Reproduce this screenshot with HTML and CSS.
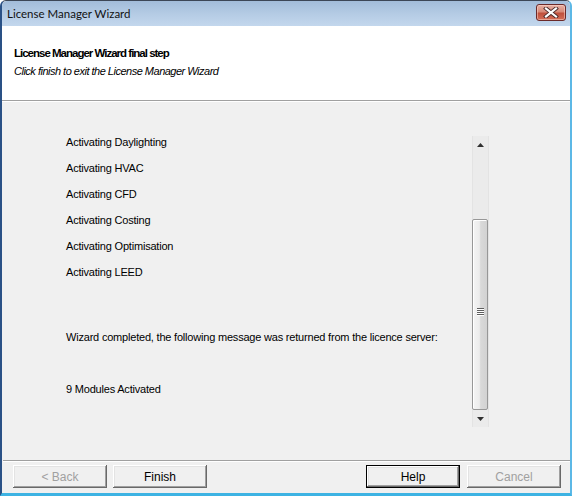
FILE: index.html
```html
<!DOCTYPE html>
<html>
<head>
<meta charset="utf-8">
<title>License Manager Wizard</title>
<link rel="stylesheet" href="styles.css">
</head>
<body>
<div class="window">
  <div class="titlebar">
    <span class="title">License Manager Wizard</span>
    <div class="close">
      <svg width="16" height="11" viewBox="0 0 16 11">
        <path d="M3 1.5 L13 9.5 M13 1.5 L3 9.5" stroke="#4a2a2a" stroke-width="4" stroke-linecap="square" fill="none"/>
        <path d="M3 1.5 L13 9.5 M13 1.5 L3 9.5" stroke="#ffffff" stroke-width="2.2" stroke-linecap="square" fill="none"/>
      </svg>
    </div>
  </div>
  <div class="header">
    <div class="h-title">License Manager Wizard final step</div>
    <div class="h-sub">Click finish to exit the License Manager Wizard</div>
  </div>
  <div class="sep"></div>
  <div class="content">
    <div class="textbox">
      <div class="lines">
        <p class="item">Activating Daylighting</p>
        <p class="item">Activating HVAC</p>
        <p class="item">Activating CFD</p>
        <p class="item">Activating Costing</p>
        <p class="item">Activating Optimisation</p>
        <p class="item">Activating LEED</p>
        <p class="msg">Wizard completed, the following message was returned from the licence server:</p>
        <p class="result">9 Modules Activated</p>
      </div>
      <div class="scrollbar">
        <div class="sb-btn">
          <svg width="7" height="4" viewBox="0 0 7 4"><path d="M3.5 0 L7 4 L0 4 Z" fill="#303030"/></svg>
        </div>
        <div class="sb-track"></div>
        <div class="sb-thumb">
          <div class="grip">
            <span></span><span></span><span></span><span></span>
          </div>
        </div>
        <div class="sb-btn">
          <svg width="7" height="4" viewBox="0 0 7 4"><path d="M0 0 L7 0 L3.5 4 Z" fill="#303030"/></svg>
        </div>
      </div>
    </div>
  </div>
  <div class="sep2"></div>
  <div class="footer">
    <div class="btns-left">
      <button class="btn disabled">&lt; Back</button>
      <button class="btn">Finish</button>
    </div>
    <div class="btns-right">
      <button class="btn default">Help</button>
      <button class="btn disabled">Cancel</button>
    </div>
  </div>
</div>
</body>
</html>
```

FILE: styles.css
```css
* { box-sizing: border-box; }
html, body {
  margin: 0;
  padding: 0;
  width: 572px;
  height: 496px;
  overflow: hidden;
  background: #ffffff;
}
.window {
  width: 572px;
  height: 496px;
  display: flex;
  flex-direction: column;
  background: #f0f0f0;
  border-left: 2px solid #2a5186;
  border-right: 2px solid #5cb8e6;
  border-bottom: 3px solid #3db3e3;
  border-top: 1px solid #3c4656;
  border-top-left-radius: 6px;
  border-top-right-radius: 6px;
  font-family: "Liberation Sans", Arial, sans-serif;
  font-size: 11px;
  color: #000;
}
.titlebar {
  height: 25px;
  flex: none;
  display: flex;
  align-items: center;
  justify-content: space-between;
  padding: 0 4px 0 5px;
  background: linear-gradient(to bottom, #a2bcd9 0%, #b4cbe4 50%, #c3d7ed 100%);
  border-top-left-radius: 5px;
  border-top-right-radius: 5px;
}
.title {
  font-family: Lato, "Noto Sans", sans-serif;
  font-size: 11.5px;
  color: #111;
}
.close {
  width: 30px;
  height: 17px;
  margin-top: -3px;
  border: 1px solid #6b2a2a;
  border-radius: 3px;
  background: linear-gradient(to bottom, #e7b0a4 0%, #d78a78 45%, #c0503c 55%, #d36e58 100%);
  display: flex;
  align-items: center;
  justify-content: center;
  box-shadow: inset 0 0 0 1px rgba(255,220,210,0.5);
}
.header {
  height: 74px;
  flex: none;
  background: #ffffff;
  padding: 20px 0 0 12px;
}
.h-title {
  font-weight: bold;
  font-size: 11.5px;
  letter-spacing: -1px;
  line-height: 15px;
}
.h-sub {
  font-style: italic;
  font-size: 11px;
  letter-spacing: -0.5px;
  line-height: 15px;
  margin-top: 3px;
}
.sep {
  height: 2px;
  flex: none;
  border-top: 1px solid #a0a0a0;
  border-bottom: 1px solid #ffffff;
}
.content {
  flex: 1;
  padding: 34px 0 0 0;
}
.textbox {
  display: flex;
  height: 291px;
  margin-left: 62px;
  width: 425px;
}
.lines {
  flex: 1;
  padding-left: 2px;
  line-height: 13px;
  letter-spacing: -0.2px;
}
.lines p { margin: 0; }
.item { margin-bottom: 13px !important; }
.msg { margin-top: 52px !important; }
.result { margin-top: 39px !important; }
.scrollbar {
  width: 17px;
  flex: none;
  display: flex;
  flex-direction: column;
  background: #ebebeb;
  border-left: 1px solid #e3e3e3;
  border-right: 1px solid #e3e3e3;
}
.sb-btn {
  height: 17px;
  flex: none;
  display: flex;
  align-items: center;
  justify-content: center;
}
.sb-track { height: 66px; flex: none; }
.sb-thumb {
  flex: 1;
  margin: 0 0 0 -1px;
  width: 16px;
  border: 1px solid #979797;
  border-radius: 2px;
  background: linear-gradient(to right, #f4f4f4 0%, #ececec 45%, #d9d9d9 55%, #d2d2d2 100%);
  box-shadow: inset 1px 1px 0 #ffffff;
  display: flex;
  align-items: flex-start;
  justify-content: center;
  padding-top: 88px;
}
.grip {
  display: flex;
  flex-direction: column;
  gap: 1px;
}
.grip span {
  display: block;
  width: 7px;
  height: 1px;
  background: #5e5e5e;
  box-shadow: 0 1px 0 #ffffff;
}
.sep2 {
  height: 2px;
  flex: none;
  border-top: 1px solid #a0a0a0;
  border-bottom: 1px solid #ffffff;
  margin-left: 1px;
}
.footer {
  height: 31px;
  flex: none;
  display: flex;
  justify-content: space-between;
  padding: 3px 9px 0 11px;
}
.btns-left, .btns-right { display: flex; gap: 6px; }
.btns-right { gap: 7px; }
.btn {
  width: 94px;
  height: 23px;
  font-family: "Liberation Sans", Arial, sans-serif;
  font-size: 12px;
  color: #000;
  background: #f0f0f0;
  border: none;
  border-radius: 0;
  padding: 0;
  box-shadow: inset -1px -1px 0 #696969, inset 1px 1px 0 #ffffff, inset -2px -2px 0 #a0a0a0, inset 2px 2px 0 #e3e3e3;
}
.btn.disabled { color: #a0a0a0; }
.btn.default {
  box-shadow: inset 0 0 0 1px #000000, inset -2px -2px 0 #696969, inset 2px 2px 0 #ffffff, inset -3px -3px 0 #a0a0a0, inset 3px 3px 0 #e3e3e3;
}
```
